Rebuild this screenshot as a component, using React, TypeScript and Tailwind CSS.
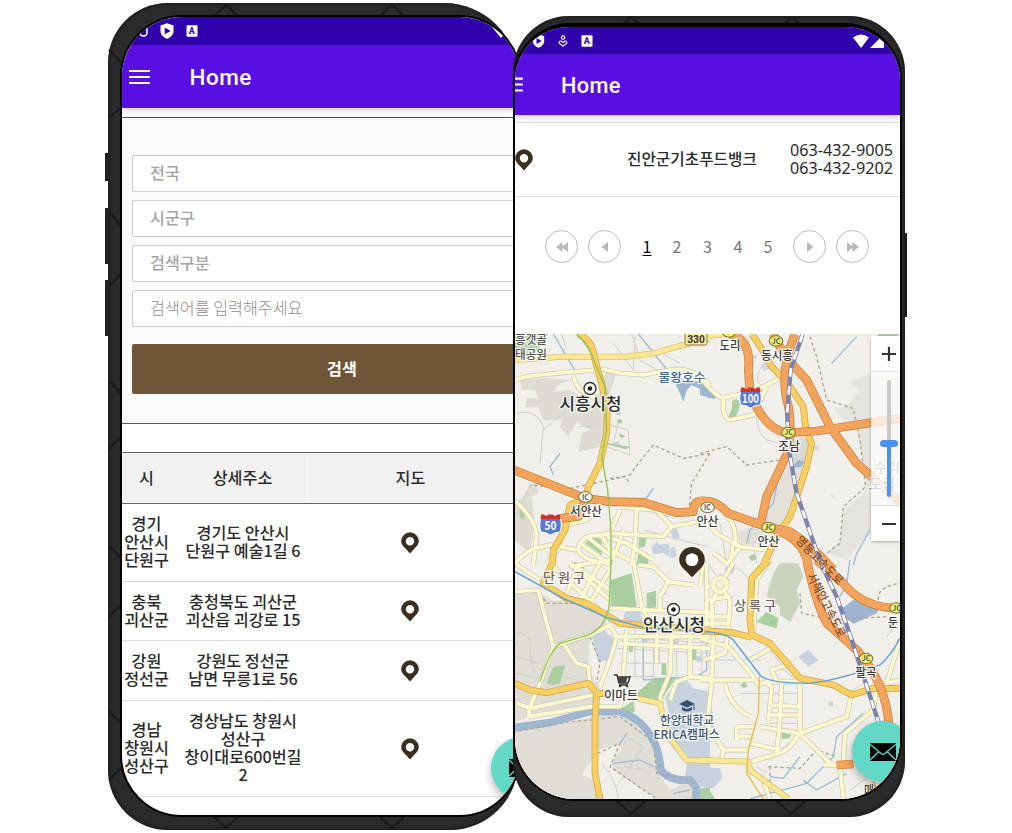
import React from "react";

const FONT = "font-['Noto_Sans_CJK_KR','Noto_Sans',sans-serif]";

function Pin({ className }: { className: string }) {
  return (
    <svg viewBox="0 0 18 22" className={className}>
      <path fillRule="evenodd" fill="#3a2e20" d="M9 0.3a8.8 8.8 0 0 1 8.8 8.8c0 3.6-2.6 5.9-4.8 7.9L9 21.6 5 17C2.800 15 .2 12.700 .2 9.100A8.800 8.800 0 0 1 9 .3zM9 5a4.200 4.200 0 1 0 0 8.400A4.200 4.200 0 0 0 9 5z" />
    </svg>
  );
}

function Shield({ className }: { className: string }) {
  return (
    <svg viewBox="0 0 14 16" className={className}>
      <path fill="#fff" d="M7 .3 13.500 2.500v5.700c0 3.300-2.600 6-6.500 7.500C3.100 14.200.5 11.500.5 8.200V2.500z" />
      <path fill="#3002ab" d="M4.700 4.500v6.800L10.700 7.900z" />
    </svg>
  );
}

function LetterBadge({ className }: { className: string }) {
  return (
    <svg viewBox="0 0 12 12" className={className}>
      <rect x=".5" y=".2" width="11" height="11.600" rx="1" fill="#fff" />
      <text x="5.700" y="9" textAnchor="middle" fontSize="9" fontWeight="700" fill="#3002ab" className="font-['Roboto',sans-serif]">A</text>
    </svg>
  );
}

function Burger({ className }: { className: string }) {
  return (
    <svg viewBox="0 0 22 16" className={className}>
      <path d="M0 1.700h22M0 8h22M0 14.300h22" stroke="#fff" strokeWidth="2.200" />
    </svg>
  );
}

function Mail({ className }: { className: string }) {
  return (
    <svg viewBox="0 0 26 18" className={className}>
      <rect width="26" height="18" fill="#000" />
      <path d="M0 1.200 11 10.500q2 1.500 4 0L26 1.200M0 17 8.800 8.700M26 17 17.200 8.700" fill="none" stroke="#62d8c6" strokeWidth="1.300" />
    </svg>
  );
}

function Fab({ className }: { className: string }) {
  return (
    <button className={`absolute flex items-center justify-center rounded-full bg-[#62d8c6] shadow-[0_4px_8px_rgba(0,0,0,0.3)] ${className}`}>
      <Mail className="h-[18px] w-[26px]" />
    </button>
  );
}

const rows: { region: string[]; address: string[]; height: string }[] = [
  { region: ["경기", "안산시", "단원구"], address: ["경기도 안산시", "단원구 예술1길 6"], height: "h-[78px]" },
  { region: ["충북", "괴산군"], address: ["충청북도 괴산군", "괴산읍 괴강로 15"], height: "h-[59px]" },
  { region: ["강원", "정선군"], address: ["강원도 정선군", "남면 무릉1로 56"], height: "h-[60px]" },
  { region: ["경남", "창원시", "성산구"], address: ["경상남도 창원시", "성산구", "창이대로600번길", "2"], height: "h-[96px]" },
];

function Lines({ items }: { items: string[] }) {
  return (
    <div className="flex flex-col items-center pb-[3px] whitespace-nowrap">
      {items.map((t) => (
        <span key={t}>{t}</span>
      ))}
    </div>
  );
}

function SearchPhone() {
  return (
    <section className="relative mt-[3px] h-[827px] w-[410px] shrink-0 rounded-[60px] rounded-tr-[74px] rounded-br-[68px] bg-[#2b2b2b] pt-3 pl-3 shadow-[inset_0_0_5px_#111]">
      <svg viewBox="0 0 410 827" className="absolute inset-0 h-full w-full overflow-hidden" fill="none" stroke="#191919" strokeWidth="2">
        <path d="M106 13 118 2 130 13M272 13 284 2 296 13M106 814 118 825 130 814M272 814 284 825 296 814M1 47 13 59M1 115 13 104M1 209 13 222M1 283 13 271M1 378 13 390M1 446 13 434M1 543 13 555M1 614 13 602M1 708 13 720M1 777 13 765" />
      </svg>
      <i className="absolute top-[150px] -left-[3px] h-7 w-[3px] bg-[#222]" />
      <i className="absolute top-[205px] -left-[3px] h-14 w-[3px] bg-[#222]" />
      <i className="absolute top-[277px] -left-[3px] h-14 w-[3px] bg-[#222]" />
      <div className="relative flex h-[802px] w-[401px] flex-col overflow-hidden rounded-[62px] border-2 border-black bg-white">
        <div className="flex h-[28px] shrink-0 items-center bg-[#3002ab] pl-[17px]">
          <svg viewBox="0 0 9 12" className="h-3 w-[9px]">
            <path d="M1 2v5q0 4 3.500 4T8 7V1" fill="none" stroke="#fff" strokeWidth="1.500" />
          </svg>
          <Shield className="ml-[12px] h-4 w-3.5" />
          <LetterBadge className="ml-3 h-3 w-3" />
          <svg viewBox="0 0 20 14" className="ml-[294px] h-3.5 w-5 shrink-0">
            <path d="M0 3q9-6 18 0L9 14z" fill="#fff" />
          </svg>
        </div>
        <header className="z-10 flex h-[63px] shrink-0 items-center bg-[#590ee2] pl-[7px] shadow-[0_2px_6px_rgba(0,0,0,0.2)]">
          <Burger className="h-4 w-[21px]" />
          <h1 className="mt-0.5 ml-[39.500px] font-['Roboto',sans-serif] text-[22.500px] font-medium tracking-[0.500px] text-white">Home</h1>
        </header>
        <form className={`mt-[9px] flex h-[307px] shrink-0 flex-col border-y border-[#555] bg-[#fafafa] pt-[37px] pl-[10px] text-[16.200px] ${FONT}`}>
          <div className="mb-[8.500px] flex h-[36.600px] items-center rounded-l-[2px] border border-r-0 border-[#ccc] bg-white pb-0.5 pl-[17px] font-medium text-[#a4a4a4]">전국</div>
          <div className="mb-[8.500px] flex h-[36.600px] items-center rounded-l-[2px] border border-r-0 border-[#ccc] bg-white pb-0.5 pl-[17px] font-medium text-[#a4a4a4]">시군구</div>
          <div className="mb-[8.500px] flex h-[36.600px] items-center rounded-l-[2px] border border-r-0 border-[#ccc] bg-white pb-0.5 pl-[17px] font-medium text-[#a4a4a4]">검색구분</div>
          <div className="flex h-[36.600px] items-center rounded-l-[2px] border border-r-0 border-[#ccc] bg-white pb-0.5 pl-[17px] font-light text-[#8e8e8e]">검색어를 입력해주세요</div>
          <div className="mt-[17px] flex h-[50px] items-center rounded-l-[2px] bg-[#6e5637] pb-0.5 pl-[195px] font-bold text-white">검색</div>
        </form>
        <div className={`mt-[28px] text-[16.200px] leading-[18px] font-medium text-[#2b2b2b] ${FONT}`}>
          <div className="grid h-[52px] grid-cols-[49px_137px_205px] items-center border-y border-[#666] bg-[#f1f1f1]">
            <span className="pb-[3px] text-center">시</span>
            <span className="flex h-full items-center justify-center border-r border-[#f8f8f8] pb-[3px] pl-[7px]">상세주소</span>
            <span className="pb-[3px] text-center">지도</span>
          </div>
          {rows.map((r) => (
            <div key={r.address[0]} className={`grid grid-cols-[49px_137px_204px] items-center border-b border-[#ddd] ${r.height}`}>
              <Lines items={r.region} />
              <div className="pl-[7px]">
                <Lines items={r.address} />
              </div>
              <Pin className="h-[22px] w-[18px] justify-self-center" />
            </div>
          ))}
        </div>
        <Fab className="top-[719.500px] left-[369px] h-[62px] w-[62px]" />
      </div>
    </section>
  );
}

type Tile = "a" | "b" | "c" | "d";
const tiles: Record<Tile, string> = {
  a: "translate(510 330) scale(.33333)",
  b: "translate(700 330) scale(.33333)",
  c: "translate(510 560) scale(.33333)",
  d: "translate(700 560) scale(.33333)",
};

const areas: [Tile, string, string][] = [
  ["a", "#dddbd4", "M30 150L100 145 190 150 150 160 130 185 180 180 215 200 200 250 240 230 262 200 290 120 318 130 300 190 290 300 270 350 205 365 215 310 240 300 200 275 175 320 150 290 160 270 100 270 85 230 45 232 50 205 85 205 75 180 35 180z"],
  ["a", "#dddbd4", "M12 520L40 500 60 465 75 455 85 490 65 500 75 580 60 670 12 630z"],
  ["a", "#a9cf9e", "M15 12H115L90 50 70 75 15 90z"],
  ["a", "#9cb4d0", "M470 140L600 160V208L575 180 545 165 530 180 520 215 510 190 495 160z"],
  ["a", "#c8d2de", "M480 600l20-5 10 30-20 5zM480 655l15-5 5 30-18 3zM425 650l15-15 8 10 30-5v40l-18-12-30 5zM315 225h18v28l-15 3zM310 340l15-8 5 12-12 6z"],
  ["a", "#a9cf9e", "M322 268h14v12h-14zM328 308l20 12-18 3zM290 338l70 12-12 8-58-15zM225 640q25-25 50-10v45zM388 620l22 5-5 25-20 5zM385 670h30v35h-35zM30 540q20 10 10 30l-12-10z"],
  ["b", "#e5e3dd", "M513 130L450 155 480 180 440 230 400 235 430 270 470 300 490 400 500 480 430 540 420 630 380 670 440 690 513 600 600 500V130z"],
  ["b", "#e2e0d9", "M240 410L310 405 285 540 240 590 180 575zM110 605L185 585 200 640 120 645z"],
  ["b", "#d9d8d2", "M270 330L310 320 335 340 315 400 275 400z"],
  ["b", "#9cb4d0", "M0 150L50 190 45 208 0 195zM270 415l25-25 18 5-8 15z"],
  ["b", "#a9cf9e", "M95 215q20-20 25 10l-15 45-20-10q15-25 10-45zM534 12h62v8h-62zM145 680l18-8 8 12-15 10z"],
  ["b", "#cfd8e3", "M185 103l15-4 6 18-15 6zM158 75h12v12h-12zM340 345l18 5-3 10h-15zM392 495l12 2-5 8zM130 650l12-4 4 12-12 4z"],
  ["c", "#dfddd6", "M15 100L75 90 130 122 170 120 240 130 275 165 290 190 240 230 235 330 265 375 245 435 60 470 15 485z"],
  ["c", "#dfddd6", "M15 512L120 500 270 465 360 475 430 555 445 640 480 690 550 655V717H15z"],
  ["c", "#f1efe9", "M262 570L330 550 335 570 305 600 310 630 440 717H275L255 660 215 645z"],
  ["c", "#f1efe9", "M240 330L290 300 280 380 255 365zM300 210l40-15 10 20-30 30z"],
  ["c", "#c8d2de", "M245 225L280 205 290 220 325 245 305 300 265 305zM345 155h45l10 35-60-10zM500 370l30-10 20 25 50 10V680L525 655 530 615 470 540 475 450 465 410z"],
  ["c", "#c8d2de", "M450 90l18-6v20h-15zM395 235l20-10 5 15-20 10zM480 240l25-5v25h-25zM555 290l20-5 5 20h-20zM440 265h10v40h-12z"],
  ["c", "#a9cf9e", "M302 60L365 40 382 150 302 145zM410 100l28-8v50l-28 5zM175 20q25-30 48 5l-5 30-20-15zM110 370l20-50 35-5-15 55-20 5zM430 355L500 350 460 410 450 425 385 415 380 400zM335 445l35-22 5 30-25 15zM455 310h14v35h-15zM545 265h14v35h-14zM355 250h14v25h-12zM550 690l50-10v37h-40z"],
  ["d", "#c9d3bd", "M205 90Q220 30 240 10H295L310 50 290 90 300 130 270 185 240 165 240 140 200 110z"],
  ["d", "#a9cf9e", "M170 185L200 155 235 175 230 205 195 195zM245 520l30-5-5 20-25 3zM120 375l15-8 8 12-12 6zM0 690q25-15 45 27H0z"],
  ["d", "#9cb4d0", "M420 150L460 120 540 140 530 160 460 192 440 175 425 170z"],
  ["d", "#c8d2de", "M295 290L325 270 355 300 325 320zM0 410l30 10 8 40 10 80-48-10zM0 620l60 5 8 30-30 30-38-5zM385 425h14v12h-14zM75 20l30-5-5 25-25 5z"],
];

const lanes: [Tile, string][] = [
  ["a", "M170 60L155 12M20 250Q80 235 100 290L90 400M100 300L170 240M310 40L370 120 375 20M365 12L390 90 460 130M210 290L270 285M300 285L355 300 360 375 290 350M310 340L325 280M440 60L510 100M20 560L60 465M360 530L480 560M400 600L590 650"],
  ["b", "M200 90Q150 150 190 170M165 90L150 130M170 250Q165 300 200 330L260 345M60 580L80 700M160 640L170 700"],
  ["c", "M15 220Q70 220 60 280L75 340M15 290L90 310M15 340L120 360M160 350L230 370M20 420L110 390M320 230L600 250M320 265L600 280M330 310H470M330 350H440M375 180V350M430 190V380M500 230V370M575 220V350M340 620L410 630M320 680L400 560 350 530M275 610Q320 660 325 717M20 680L90 717"],
  ["d", "M55 40L90 60M110 20L150 60M170 620L200 640M210 600L300 520M190 250L250 320M240 320L300 370M0 300H180M120 400H300M200 460H300M200 490H300M560 230L600 180M450 690L520 640M10 120L100 110M30 20L60 60"],
];

const streets: [Tile, string][] = [
  ["a", "M12 150L60 138 160 128 280 118M190 138Q200 190 265 205M280 118L330 130 400 135 490 118Q560 115 600 165"],
  ["a", "M12 510Q80 570 80 620L70 705M110 705L130 670 165 640M150 590L230 570 280 520M330 530L380 535 440 540 485 590 540 580 590 570M485 590L460 620 380 615 300 610 230 620Q190 650 215 675L240 690 300 700M380 535L375 640 365 705M330 540L300 610M12 700L60 660 120 645 200 660M290 620L350 640 430 690"],
  ["a", "M230 620L320 690M210 640L300 705M340 600L320 660 290 705M270 610L300 660 360 690"],
  ["b", "M0 140Q45 200 70 203L160 185 240 145M70 203Q65 265 90 270L160 255 200 170M0 560L50 610 120 650 200 660M100 640L90 700M80 560Q110 580 105 640M40 670L80 700M120 650L80 705"],
  ["c", "M15 95L85 90 105 170 130 260 90 370 60 440 55 470M130 260Q200 235 240 225L300 195 320 230 300 300 270 380M160 250L200 310 235 320 240 370 270 400M60 445L250 405M55 470L245 440 330 440 340 400M20 430L60 445M320 230H600M330 250L600 265M350 210L340 350M300 145L600 158M370 0L395 140 420 190M300 0L180 20M385 15L430 20 475 65 550 75M475 65L450 110V150M485 190L480 340 450 410 455 430M540 220V350L500 365 480 420M600 355L540 350M440 190V310M590 10V220M120 10L290 170M180 10L300 120M15 10L90 60M200 20L300 90M170 100L200 30M210 120L270 10M240 130L300 30"],
  ["d", "M10 0L0 80M15 80L60 75 100 10M60 75L90 120 85 200M60 75L35 130 40 240 35 370 20 500M20 120L90 110M20 170H90M0 190H90M0 235L85 260 160 350 175 375 200 365H300M85 200L75 280 10 300M0 360H170M300 365V520M200 370L215 380 205 490M245 370L240 480 230 580M205 435L300 440M200 465H300M180 500L300 520M150 605L240 580 270 560 300 520 440 470 455 400 490 380M300 520L390 610 430 620M430 610L435 520 520 450 530 380M370 615H420L430 717M75 370Q90 440 150 470M20 490L70 570 65 600M65 570H145M110 500H170M110 530H160M110 500V540M150 550L240 570M230 365L215 330 280 310M160 230L170 60 210 0M220 260L150 300M600 240L560 370 600 360M190 660L210 717M195 245L280 320"],
];

const mains: [Tile, string][] = [
  ["a", "M15 90L160 80 350 80 430 70 520 45 600 25"],
  ["b", "M0 20L80 12"],
  ["c", "M380 415L450 430 470 520 530 600 600 603"],
  ["d", "M0 600L145 605 150 630 265 717"],
];

const golds: [Tile, string][] = [
  ["a", "M205 12Q250 30 255 90L275 160 292 240 290 310 270 400 235 470 225 505 180 525 165 600 130 660 127 705"],
  ["b", "M155 12Q190 60 215 110L260 155 310 230 318 300 335 340 320 410 270 560 230 620 190 705"],
  ["c", "M130 0L100 70 170 115 230 130 330 190 400 197 600 210"],
  ["c", "M15 370L60 390 110 398 235 370 260 400 255 480 255 640 270 717M260 400L320 402"],
  ["d", "M205 0L155 55 150 180 155 225 210 250 300 355 400 375 455 405 520 385 600 385M0 212L90 217 155 232"],
];

const highways: [Tile, string][] = [
  ["a", "M12 420L225 505 300 515 400 517 500 548 550 545Q550 500 600 517M225 510L205 560 150 565"],
  ["b", "M90 12Q155 30 145 120L150 190Q200 310 270 308L350 303 600 265M220 12Q250 80 320 150L390 290 470 400 600 515M285 12Q240 120 260 210 280 270 262 370L200 500 180 590"],
  ["b", "M0 515Q45 505 85 550L205 592 270 605Q340 650 400 720M205 592Q310 620 325 705"],
  ["d", "M320 0Q345 120 380 190L470 270Q560 370 567 500M350 0L430 70Q490 145 600 145M410 615L460 612M510 670L530 717"],
];

const streams: [Tile, string][] = [
  ["a", "M130 12L200 130M385 12L480 130M150 370L120 410 130 435M430 475L405 510"],
  ["b", "M470 20L395 100M240 415L220 520 150 600 140 640M510 600L470 670 460 705"],
  ["c", "M400 220V360L560 350 590 330V200M350 520L330 550M310 610L390 600 430 620M490 700L540 690"],
  ["d", "M450 0L440 70 420 110M490 460L410 530 400 590 320 670 210 700 150 717M310 660L350 690 440 640M210 650L250 655 300 590"],
];

const dashes: [Tile, string][] = [
  ["a", "M600 370L520 385 430 345 385 400 360 435 300 450 180 475 60 465M600 370L545 460 535 560M300 445L345 440 360 460"],
  ["b", "M330 20L350 80 380 210 460 235 480 330 497 470 430 530 420 640 380 670M0 370L80 350 140 405 240 390"],
  ["c", "M90 100L110 130 240 130M240 230L270 305 260 370M320 470L250 480 180 485 15 515M330 470L430 545 440 640 550 660M262 580L330 550 300 620 440 717"],
  ["d", "M300 100L305 160 400 180 560 170M205 620L300 625 350 570 410 590M210 620L210 717M535 120Q530 80 600 70"],
];

type LayerProps = { items: [Tile, string][]; stroke: string; width: number; dash?: string; opacity?: number };

function Layer({ items, stroke, width, dash, opacity = 1 }: LayerProps) {
  return (
    <g fill="none" stroke={stroke} strokeWidth={width} strokeDasharray={dash} opacity={opacity} strokeLinejoin="round" strokeLinecap="butt">
      {items.map(([tile, d]) => (
        <path key={tile + d} transform={tiles[tile]} d={d} />
      ))}
    </g>
  );
}

const labels: { t: string; x: number; y: number; w: number; s: number; c: string; b?: boolean }[] = [
  { t: "흥갯골", x: 531, y: 344, w: 32, s: 12.5, c: "#555" },
  { t: "태공원", x: 531, y: 359, w: 32, s: 12.5, c: "#555" },
  { t: "시흥시청", x: 590.500, y: 409.500, w: 62, s: 17, c: "#2b2b2b" },
  { t: "물왕호수", x: 682, y: 382, w: 47, s: 12.5, c: "#41688f" },
  { t: "도리", x: 730, y: 350, w: 21, s: 12, c: "#3b3b3b" },
  { t: "동시흥", x: 777, y: 360, w: 32, s: 12, c: "#3b3b3b" },
  { t: "조남", x: 789, y: 451, w: 22, s: 12, c: "#3b3b3b" },
  { t: "서안산", x: 586, y: 516, w: 32, s: 12, c: "#3b3b3b" },
  { t: "안산", x: 707.500, y: 526, w: 22, s: 12, c: "#3b3b3b" },
  { t: "안산", x: 768.500, y: 545.500, w: 22, s: 12, c: "#3b3b3b" },
  { t: "단 원 구", x: 564, y: 582, w: 42, s: 13, c: "#71665d" },
  { t: "상 록 구", x: 755, y: 610, w: 42, s: 13, c: "#71665d" },
  { t: "안산시청", x: 674, y: 630.500, w: 62, s: 17, c: "#2b2b2b" },
  { t: "이마트", x: 621, y: 700, w: 34, s: 12.5, c: "#3b3b3b" },
  { t: "한양대학교", x: 687, y: 725, w: 54, s: 12.2, c: "#3d5876" },
  { t: "ERICA캠퍼스", x: 686.500, y: 738.500, w: 66, s: 12.2, c: "#3d5876" },
  { t: "팔곡", x: 866, y: 677, w: 21, s: 12, c: "#3b3b3b" },
  { t: "둔", x: 893, y: 627, w: 10, s: 12, c: "#3b3b3b" },
  { t: "매", x: 869, y: 795, w: 10, s: 12, c: "#3b3b3b" },
  { t: "수리", x: 887, y: 472, w: 26, s: 14, c: "#777" },
  { t: "도립", x: 882, y: 489, w: 26, s: 14, c: "#666" },
];

const junctions: { x: number; y: number; t: string; f: string }[] = [
  { x: 585.500, y: 497, t: "IC", f: "#fffdf0" },
  { x: 707.500, y: 507.500, t: "IC", f: "#fffdf0" },
  { x: 776, y: 341, t: "JC", f: "#eef06a" },
  { x: 788.500, y: 432.500, t: "JC", f: "#eef06a" },
  { x: 768.500, y: 527.500, t: "JC", f: "#eef06a" },
  { x: 866, y: 658.500, t: "JC", f: "#eef06a" },
  { x: 896.500, y: 608, t: "JC", f: "#eef06a" },
  { x: 729, y: 332, t: "", f: "#eef06a" },
];

function RouteShield({ x, y, t }: { x: number; y: number; t: string }) {
  return (
    <g transform={`translate(${x} ${y})`}>
      <path d="M-9.500-7q4-3 9.500 0 5-3 9.500 0 2.500 9 0 15-5 0-9.500 3-4.500-3-9.500-3-2.500-6 0-15z" fill="#5878d8" stroke="#fff" strokeWidth="1" />
      <path d="M-9.500-9.500h3l2 1.500 2.500-1.500h4L4.500-8l2.500-1.500h2.500l.5 4.500h-20z" fill="#cf3328" />
      <text y="6" textAnchor="middle" fontSize="12" fontWeight="700" fill="#fff" textLength={t.length > 2 ? 17 : 12} lengthAdjust="spacingAndGlyphs">{t}</text>
    </g>
  );
}

const railMain: [Tile, string][] = [
  ["b", "M308 12L272 120 262 240 265 350 290 490 345 650 375 720"],
  ["d", "M365 15L410 110 455 240 540 500"],
];
const railThin: [Tile, string][] = [
  ["c", "M15 35L160 115 290 172 400 203 600 215"],
  ["d", "M0 215Q70 215 100 240L180 345Q200 370 330 370 420 360 540 315 570 290 600 235"],
];
const railGreen: [Tile, string][] = [
  ["a", "M200 12Q240 50 255 100L285 170 290 300 275 380 293 480 303 600V705"],
  ["c", "M303 0L298 130Q290 210 220 230L150 250Q120 270 90 365"],
];
const railYellow: [Tile, string][] = [["d", "M178 350L175 460 145 570 140 640 190 717"]];

function MapCanvas() {
  return (
    <svg viewBox="515 334 385 465" className={`h-[465px] w-[385px] ${FONT}`}>
      <rect x="515" y="334" width="385" height="465" fill="#f1efe9" />
      {areas.map(([tile, fill, d]) => (
        <path key={d} transform={tiles[tile]} d={d} fill={fill} />
      ))}
      <path transform={tiles.c} d="M15 502L120 488 240 455 330 455Q390 475 420 525 450 570 452 630 480 665 540 660L558 680V717" fill="none" stroke="#9fb6d0" strokeWidth="23" />
      <Layer items={streams} stroke="#9db9d8" width={4} />
      <Layer items={lanes} stroke="#cfcdc8" width={3} />
      <Layer items={dashes} stroke="#aaa391" width={4} dash="10 8" />
      <Layer items={streets} stroke="#c9c7b4" width={15} />
      <Layer items={streets} stroke="#fdf9cf" width={11} />
      <g transform={tiles.d} fill="#fdf9cf" stroke="#cfccb5" strokeWidth="2">
        <circle cx="60" cy="75" r="28" />
        <circle cx="60" cy="75" r="14" fill="#f4efce" />
      </g>
      <Layer items={mains} stroke="#d5bd6d" width={18} />
      <Layer items={mains} stroke="#fae693" width={14} />
      <Layer items={golds} stroke="#cf9f3d" width={20} />
      <Layer items={golds} stroke="#f7cf63" width={16} />
      <Layer items={highways} stroke="#c77936" width={26} />
      <Layer items={highways} stroke="#f3a45c" width={22} />
      <Layer items={railYellow} stroke="#edb949" width={4} />
      <Layer items={railThin} stroke="#5c9fd6" width={4} />
      <Layer items={railGreen} stroke="#8cc44e" width={4} />
      <Layer items={railMain} stroke="#7d82ae" width={13} />
      <Layer items={railMain} stroke="#fff" width={8} dash="26 28" />

      <g fontSize="12" fontWeight="500" fill="#8a4a1c">
        <text transform="translate(795 541) rotate(46)" textLength="62" lengthAdjust="spacingAndGlyphs">영동고속도로</text>
        <text transform="translate(807 576) rotate(63)" textLength="70" lengthAdjust="spacingAndGlyphs">서해안고속도로</text>
      </g>
      <rect x="685" y="332" width="22" height="13" rx="1.500" fill="#fae89c" stroke="#927b37" />
      <text x="696" y="343" textAnchor="middle" fontSize="10.500" fontWeight="700" fill="#333" className="font-['Liberation_Sans',sans-serif]">330</text>
      {junctions.map((j) => (
        <g key={`${j.x}-${j.y}`}>
          <ellipse cx={j.x} cy={j.y} rx="6.800" ry="5.200" fill={j.f} stroke="#77713f" strokeWidth="1.100" />
          <text x={j.x} y={j.y + 2.5} textAnchor="middle" fontSize="7" fontWeight="700" fill="#555">{j.t}</text>
        </g>
      ))}
      <RouteShield x={750.5} y={397} t="100" />
      <RouteShield x={550.5} y={524} t="50" />
      {[[590, 388.5], [673.5, 609.5]].map(([x, y]) => (
        <g key={x}>
          <circle cx={x} cy={y} r="6" fill="#fff" stroke="#333" strokeWidth="1.300" />
          <circle cx={x} cy={y} r="2.300" fill="#222" />
        </g>
      ))}
      <path d="M614 675h3l2 8h9l2-6h-12M619 685h9" fill="none" stroke="#333" strokeWidth="1.500" />
      <path d="M617.500 677h10l-1.500 5.500h-7z" fill="#444" />
      <circle cx="620" cy="686" r="1.300" fill="#333" />
      <circle cx="627" cy="686" r="1.300" fill="#333" />
      <path d="M679 704l8-4 8 4-8 3.500zM682 707l5 2.300 5-2.300v3q-5 3-10 0zM693.500 705h1v5h-1z" fill="#35516e" />
      {labels.map((l) => (
        <text key={`${l.t}-${l.x}`} x={l.x} y={l.y} textAnchor="middle" fontSize={l.s} fontWeight={500} fill={l.c} stroke="#fff" strokeOpacity=".85" strokeWidth="2.500" paintOrder="stroke" textLength={l.w} lengthAdjust="spacingAndGlyphs">
          {l.t}
        </text>
      ))}
      <path fillRule="evenodd" fill="#3a2e20" d="M692 547a12.800 12.800 0 0 1 12.800 12.800c0 5.200-4 8.500-7 11.500l-5.800 6-5.800-6c-3-3-7-6.300-7-11.500A12.800 12.800 0 0 1 692 547zm0 6.500a6.300 6.300 0 1 0 0 12.600 6.300 6.300 0 0 0 0-12.600z" />
      <circle cx="692" cy="559.800" r="6.300" fill="#fff" />
    </svg>
  );
}

function PageArrow({ double, flip, className = "" }: { double?: boolean; flip?: boolean; className?: string }) {
  return (
    <span className={`flex size-[33px] items-center justify-center rounded-full border border-[#bbb] ${className}`}>
      <svg viewBox="0 0 12 10" className={flip ? "h-2.5 w-3 rotate-180" : "h-2.5 w-3"} fill="#b8b8b8">
        {double ? <path d="M6.500 0v10L0 5zM12 0v10L5.500 5z" /> : <path d="M9 0v10L2.500 5z" />}
      </svg>
    </span>
  );
}

function MapPhone() {
  return (
    <section className="relative z-10 mt-4 -ml-[5px] h-[801px] w-[392px] shrink-0 rounded-[56px] bg-[#2b2b2b] pt-[7px] shadow-[inset_0_0_5px_#111]">
      <svg viewBox="0 0 392 801" className="absolute inset-0 h-full w-full overflow-hidden" fill="none" stroke="#191919" strokeWidth="2">
        <path d="M110 8 118 1 126 8M271 8 279 1 287 8M104 785 118 798 132 785M264 785 278 798 292 785" />
      </svg>
      <i className="absolute top-[217px] -right-[2px] h-[84px] w-[3px] bg-[#1b1b1b]" />
      <div className="relative flex h-[778px] w-[389px] flex-col overflow-hidden rounded-[57px] rounded-b-[62px] border-2 border-t-4 border-black bg-white">
        <div className="flex h-[27px] shrink-0 items-center bg-[#3002ab] pl-[17px]">
          <Shield className="h-3.5 w-[13px]" />
          <svg viewBox="0 0 12 14" className="ml-[12px] h-3 w-3" fill="none" stroke="#fff" strokeWidth="1.300">
            <circle cx="6" cy="3" r="2" />
            <path d="M1.500 9.500q0-3 2.500-2.500L6 9l2-2q2.500-.5 2.500 2.500L6 13z" />
          </svg>
          <LetterBadge className="ml-3 h-3 w-3" />
          <svg viewBox="0 0 36 14" className="ml-[260px] h-3.5 w-9 shrink-0" fill="#fff">
            <path d="M0 3.500q8-6 16 0L8 14zM17 14 31 0v14z" />
          </svg>
        </div>
        <header className="z-10 flex h-[61px] shrink-0 items-center overflow-hidden bg-[#590ee2] shadow-[0_2px_6px_rgba(0,0,0,0.2)]">
          <Burger className="-ml-[13px] h-[15px] w-[21px]" />
          <h1 className="mt-[3px] ml-[38px] font-['Roboto',sans-serif] text-[21.800px] font-medium tracking-[0.350px] text-white">Home</h1>
        </header>
        <div className={`mt-[7px] flex h-[75px] shrink-0 items-center border-y border-[#ddd] text-[15.700px] leading-[17.500px] font-medium text-[#2b2b2b] ${FONT}`}>
          <Pin className="h-[22px] w-[18px]" />
          <span className="ml-[94px] pb-px whitespace-nowrap">진안군기초푸드뱅크</span>
          <div className="ml-[33px] font-['Noto_Sans',sans-serif] text-[16.200px] font-normal whitespace-nowrap">
            <div>063-432-9005</div>
            <div>063-432-9202</div>
          </div>
        </div>
        <nav className={`flex h-[99px] shrink-0 items-center pl-[30px] text-[16px] text-[#777] ${FONT}`}>
          <PageArrow double />
          <PageArrow className="ml-[10px]" />
          <div className="ml-[11px] flex pb-0.5">
            <span className="w-[30px] text-center text-black underline underline-offset-2">1</span>
            <span className="w-[30px] text-center">2</span>
            <span className="w-[31px] text-center">3</span>
            <span className="w-[30px] text-center">4</span>
            <span className="w-[30px] text-center">5</span>
          </div>
          <PageArrow flip className="ml-[10px]" />
          <PageArrow flip double className="ml-[10px]" />
        </nav>
        <div className="relative mt-[38px] shrink-0">
          <MapCanvas />
          <div className="absolute top-0.5 right-0 flex h-[205px] w-[29px] flex-col rounded-l bg-white/75 shadow-[0_1px_3px_rgba(0,0,0,0.3)]">
            <div className="flex h-[35px] items-center justify-end bg-white pr-1">
              <svg viewBox="0 0 14 14" className="size-3.5" stroke="#333" strokeWidth="2.200"><path d="M0 7h14M7 0v14" /></svg>
            </div>
            <div className="flex flex-1 flex-col items-end border-y border-[#ddd] pt-2">
              <div className="mr-[9px] h-[60px] w-1 rounded-t bg-[#c8c8c8]" />
              <div className="mr-[2px] h-[7px] w-[18px] rounded-sm bg-[#4b92f8]" />
              <div className="mr-[9px] h-[50px] w-1 rounded-b bg-[#4b92f8]" />
            </div>
            <div className="flex h-[35px] items-center justify-end bg-white pr-1">
              <svg viewBox="0 0 14 14" className="size-3.5" stroke="#333" strokeWidth="2.200"><path d="M0 7h14" /></svg>
            </div>
          </div>
          <Fab className="top-[387px] left-[337px] h-[61px] w-[61px]" />
        </div>
      </div>
    </section>
  );
}

export default function App() {
  return (
    <main className="flex h-[833px] w-[1012px] items-start overflow-hidden bg-white pl-[108px]">
      <SearchPhone />
      <MapPhone />
    </main>
  );
}
